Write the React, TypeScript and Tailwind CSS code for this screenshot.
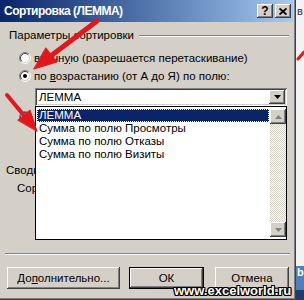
import React from "react";

const raised =
  "shadow-[inset_-1px_-1px_0_#404040,inset_1px_1px_0_#ffffff,inset_-2px_-2px_0_#808080,inset_2px_2px_0_#d4d0c8]";
const sunken =
  "shadow-[inset_1px_1px_0_#808080,inset_-1px_-1px_0_#ffffff,inset_2px_2px_0_#404040,inset_-2px_-2px_0_#d4d0c8]";

function Radio({ checked }: { checked?: boolean }) {
  return (
    <svg width="12" height="12" viewBox="0 0 12 12" className="shrink-0">
      <circle cx="6" cy="6" r="5" fill="#ffffff" />
      <path d="M2.1 9.9 A5.5 5.5 0 0 1 9.9 2.1" fill="none" stroke="#808080" />
      <path d="M9.9 2.1 A5.5 5.5 0 0 1 2.1 9.9" fill="none" stroke="#ffffff" />
      <path d="M2.8 9.2 A4.5 4.5 0 0 1 9.2 2.8" fill="none" stroke="#404040" />
      <path d="M9.2 2.8 A4.5 4.5 0 0 1 2.8 9.2" fill="none" stroke="#d4d0c8" />
      {checked && <circle cx="6" cy="6" r="2" fill="#000000" />}
    </svg>
  );
}

function Triangle({ up, color }: { up?: boolean; color: string }) {
  return (
    <svg width="7" height="4" viewBox="0 0 7 4">
      <path d={up ? "M3.5 0 L7 4 L0 4 Z" : "M0 0 L7 0 L3.5 4 Z"} fill={color} />
    </svg>
  );
}

function TitleBar() {
  return (
    <div className="mr-[3px] flex h-[22px] items-center bg-gradient-to-r from-[#0a246a] to-[#a6caf0] pl-[4px] pr-[2px]">
      <span className="flex-1 text-[12px] font-bold leading-[16px] tracking-[-0.5px] text-white">
        Сортировка (ЛЕММА)
      </span>
      <div className={`flex h-[14px] w-[16px] items-center justify-center bg-[#d4d0c8] text-[12px] font-bold leading-none ${raised}`}>
        ?
      </div>
      <div className={`ml-[2px] flex h-[14px] w-[16px] items-center justify-center bg-[#d4d0c8] ${raised}`}>
        <svg width="8" height="7" viewBox="0 0 8 7">
          <path d="M0.5 0.5 L7.5 6.5 M7.5 0.5 L0.5 6.5" stroke="#000" strokeWidth="1.8" />
        </svg>
      </div>
    </div>
  );
}

function DropList() {
  const items = ["Сумма по полю Просмотры", "Сумма по полю Отказы", "Сумма по полю Визиты"];
  return (
    <div className="absolute left-[35px] top-[106px] flex h-[134px] w-[252px] border border-black bg-white">
      <div className="flex flex-1 flex-col pt-[2px]">
        <div className="mx-[1px] h-[13px] bg-[#0a246a] pl-[2px] leading-[12px] text-white outline-1 outline-dotted outline-white -outline-offset-1">
          ЛЕММА
        </div>
        {items.map((t) => (
          <div key={t} className="h-[13px] pl-[3px] leading-[13px]">
            {t}
          </div>
        ))}
      </div>
      <div className="my-[2px] flex w-[16px] flex-col bg-[image:repeating-conic-gradient(#d4d0c8_0_25%,#ffffff_0_50%)] bg-[length:2px_2px]">
        <div className={`flex h-[15px] items-center justify-center bg-[#d4d0c8] ${raised}`}>
          <Triangle up color="#808080" />
        </div>
        <div className="flex-1" />
        <div className={`flex h-[15px] items-center justify-center bg-[#d4d0c8] ${raised}`}>
          <Triangle color="#808080" />
        </div>
      </div>
    </div>
  );
}

function Dialog() {
  return (
    <div className="relative flex h-[300px] w-[296px] shrink-0 flex-col bg-[#d4d0c8] shadow-[inset_-1px_-1px_0_#404040,inset_-2px_-2px_0_#808080]">
      <TitleBar />
      <div className="ml-[9px] mr-[7px] mt-[7px] flex h-[13px] items-center gap-[5px]">
        <span className="leading-[13px]">Параметры сортировки</span>
        <div className="h-[2px] flex-1 border-t border-b border-t-[#808080] border-b-white" />
      </div>
      <div className="ml-[19px] mt-[7px] flex h-[18px] items-center gap-[3px]">
        <Radio />
        <span>
          вручн<span className="underline">у</span>ю (разрешается перетаскивание)
        </span>
      </div>
      <div className="ml-[19px] flex h-[18px] items-center gap-[3px]">
        <Radio checked />
        <span>
          по <span className="underline">в</span>озрастанию (от А до Я) по полю:
        </span>
      </div>
      <div className={`ml-[35px] mt-[3px] flex h-[18px] w-[252px] items-center bg-white pl-[4px] pr-[2px] ${sunken}`}>
        <span className="flex-1">ЛЕММА</span>
        <div className={`flex h-[14px] w-[16px] items-center justify-center bg-[#d4d0c8] ${raised}`}>
          <Triangle color="#000000" />
        </div>
      </div>
      <div className="ml-[19px] mt-[2px] flex h-[18px] items-center">
        <Radio />
      </div>
      <div className="ml-[6px] mt-[38px] h-[13px] whitespace-nowrap">Сводка</div>
      <div className="ml-[17px] mt-[5px] h-[13px] whitespace-nowrap">Сортировать по</div>
      <div className="ml-[5px] mr-[6px] mt-[58px] h-[2px] border-t border-b border-t-[#808080] border-b-white" />
      <div className="mt-[12px] flex h-[22px]">
        <div className={`ml-[7px] flex w-[113px] items-center justify-center bg-[#d4d0c8] ${raised}`}>
          До<span className="underline">п</span>олнительно...
        </div>
        <div className="ml-[9px] flex w-[75px] items-center justify-center border border-black bg-[#d4d0c8] shadow-[inset_-1px_-1px_0_#404040,inset_1px_1px_0_#ffffff,inset_-2px_-2px_0_#808080]">
          ОК
        </div>
        <div className={`ml-[11px] flex w-[74px] items-center justify-center bg-[#d4d0c8] ${raised}`}>
          Отмена
        </div>
      </div>
      <DropList />
    </div>
  );
}

function RightStrip() {
  return (
    <div className="flex flex-1 flex-col bg-[#f3f3f3]">
      <div className="mt-[5px] h-[14px] pl-[1px] text-[11px] text-[#333]">в</div>
      <div className="flex-1" />
      <div className="h-[24px] bg-[#4f7fbf] pl-[1px] text-[11px] font-bold text-white">b</div>
      <div className="h-[10px] bg-[#1e3d6b]" />
    </div>
  );
}

function RedArrows() {
  return (
    <svg className="pointer-events-none absolute left-0 top-0" width="304" height="300" viewBox="0 0 304 300">
      <g fill="#e3161c" stroke="#e3161c" strokeLinecap="round">
        <line x1="97" y1="21" x2="52" y2="55" strokeWidth="5" />
        <path d="M34 69 L57 62 L46 48 Z" strokeWidth="1" strokeLinejoin="round" />
        <line x1="7" y1="95" x2="26" y2="118" strokeWidth="4" />
        <path d="M37 131 L30 110 L18 120 Z" strokeWidth="1" strokeLinejoin="round" />
        <line x1="298" y1="59" x2="304" y2="52" strokeWidth="3" />
      </g>
    </svg>
  );
}

export default function App() {
  return (
    <div className="relative flex h-[300px] w-[304px] overflow-hidden bg-white font-['Liberation_Sans',Arial,sans-serif] text-[11.5px] leading-[13px] text-black">
      <Dialog />
      <RightStrip />
      <RedArrows />
      <div className="absolute left-[174px] top-[283px] text-[13px] font-bold leading-[15px] text-white [text-shadow:1px_0_0_#000,-1px_0_0_#000,0_1px_0_#000,0_-1px_0_#000,1px_1px_0_#000,-1px_-1px_0_#000,1px_-1px_0_#000,-1px_1px_0_#000]">
        www.excelworld.ru
      </div>
    </div>
  );
}
